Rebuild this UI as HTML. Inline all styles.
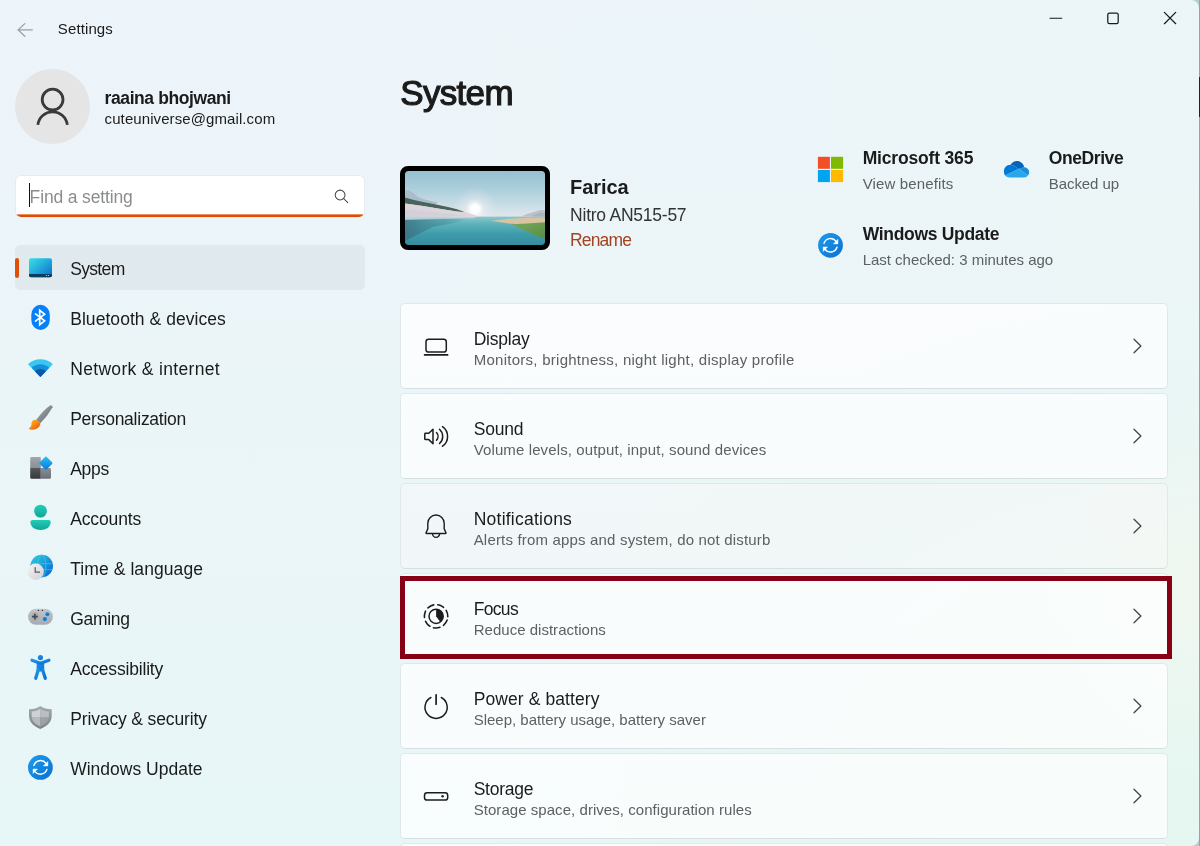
<!DOCTYPE html>
<html lang="en"><head><meta charset="utf-8"><title>Settings</title>
<style>
html,body{margin:0;padding:0}
body{width:1200px;height:846px;overflow:hidden;position:relative;background:#b5cdd3;font-family:"Liberation Sans",sans-serif}
#win{position:absolute;left:0;top:0;width:1199px;height:846px;overflow:hidden;border-radius:0 8px 8px 0;
 background:
  radial-gradient(ellipse 160px 190px at 1195px 590px, rgba(242,246,239,.85), rgba(242,246,239,0) 100%),
  radial-gradient(ellipse 700px 560px at 100% 100%, rgba(229,247,240,1), rgba(229,247,240,0) 100%),
  linear-gradient(90deg, rgba(235,246,246,0) 35%, rgba(235,246,246,.7) 100%),
  linear-gradient(180deg,#edf4fa 0%,#ebf5f8 42%,#e7f6f7 100%);}
#edge{position:absolute;left:1199px;top:0;width:1px;height:846px;background:#98a3a5}
#edge2{position:absolute;left:1199px;top:77px;width:1px;height:40px;background:#222}
.t{position:absolute;white-space:nowrap;line-height:1}
.card{position:absolute;left:400px;width:766px;height:84px;border:1px solid #dfe9ec;border-bottom-color:#d6e0e3;border-radius:5px;background:rgba(255,255,255,.72)}
.card.hov{background:rgba(249,249,249,.5)}
#sel{position:absolute;left:15px;top:245px;width:350px;height:45px;border-radius:5px;background:rgba(0,0,0,.042)}
#ind{position:absolute;left:15px;top:258px;width:4px;height:20px;border-radius:2px;background:#e0500a}
#avatar{position:absolute;left:15px;top:69px;width:75px;height:75px;border-radius:50%;background:#e5e5e5}
#search{position:absolute;left:16px;top:176px;width:348px;height:41px;border-radius:5px;background:#fff;box-shadow:0 0 0 1px rgba(0,0,0,.035);overflow:hidden}
#search:after{content:"";position:absolute;left:0;right:0;bottom:0;height:4px;background:linear-gradient(to top,#de4b04 0,#de4b04 2.1px,rgba(222,75,4,0) 3.1px)}
#caret{position:absolute;left:29px;top:183px;width:1px;height:24px;background:#111}
#dev{position:absolute;left:400px;top:166px;width:140px;height:74px;border:5px solid #000;border-radius:8px;overflow:hidden;background:#000}
#dev svg{display:block;border-radius:3px}
#red{position:absolute;left:400px;top:576px;width:762px;height:73px;border:5px solid #870016}
#ic{position:absolute;left:0;top:0}
#tx{position:absolute;left:0;top:0;width:1199px;height:846px;will-change:transform}
</style></head><body>
<div id="win"><div id="tx">
<div id="sel"></div><div id="ind"></div>
<div id="avatar"></div>
<div id="search"></div><div id="caret"></div>
<div class="card" style="top:303px"></div>
<div class="card" style="top:393px"></div>
<div class="card hov" style="top:483px"></div>
<div class="card" style="top:573px"></div>
<div class="card" style="top:663px"></div>
<div class="card" style="top:753px"></div>
<div class="card" style="top:843px"></div>
<div id="dev"><svg width="140" height="74" viewBox="0 0 140 74">
<defs>
<linearGradient id="sky" x1="0" y1="0" x2="0" y2="1"><stop offset="0" stop-color="#94c0d1"/><stop offset=".5" stop-color="#b4d3df"/><stop offset=".85" stop-color="#d3e2e9"/><stop offset="1" stop-color="#e2e6ea"/></linearGradient>
<radialGradient id="glow" cx="70" cy="38" r="22" gradientUnits="userSpaceOnUse"><stop offset="0" stop-color="#fff" stop-opacity="1"/><stop offset=".2" stop-color="#fff" stop-opacity=".9"/><stop offset=".45" stop-color="#f4eff1" stop-opacity=".4"/><stop offset="1" stop-color="#e8eef2" stop-opacity="0"/></radialGradient>
<linearGradient id="wat" x1="0" y1="0" x2="0" y2="1"><stop offset="0" stop-color="#8cc8cc"/><stop offset=".25" stop-color="#5eb3bb"/><stop offset=".6" stop-color="#3f9dab"/><stop offset="1" stop-color="#348c9f"/></linearGradient>
<linearGradient id="refl" x1="0" y1="0" x2="1" y2="0"><stop offset="0" stop-color="#3a6e80" stop-opacity=".8"/><stop offset=".6" stop-color="#3f8796" stop-opacity=".5"/><stop offset="1" stop-color="#3f8c99" stop-opacity="0"/></linearGradient>
<linearGradient id="snow" x1="0" y1="0" x2="1" y2="0"><stop offset="0" stop-color="#cfd3de"/><stop offset="1" stop-color="#e9e0e2"/></linearGradient>
<linearGradient id="grs" x1="0" y1="0" x2="1" y2="1"><stop offset="0" stop-color="#7aa860"/><stop offset="1" stop-color="#578f43"/></linearGradient>
<filter id="bl" x="-5%" y="-5%" width="110%" height="110%"><feGaussianBlur stdDeviation=".45"/></filter>
</defs>
<rect width="140" height="46" fill="url(#sky)"/>
<rect width="140" height="52" fill="url(#glow)"/>
<rect y="45.6" width="140" height="28.4" fill="url(#wat)"/>
<g filter="url(#bl)">
<path d="M0 48.5 L66 46.5 L50 52 L28 56 L0 70Z" fill="url(#refl)"/>
<path d="M0 46.5 L70 45.8 L70 47.2 L0 49Z" fill="#d8e6ea" opacity=".55"/>
<path d="M0 19 L4 19.5 L8 21.5 L13 26 L20 28.5 L26 30 L33 31.5 L40 34.5 L50 37 L56 38.5 L62 41.8 L74 45.8 L0 46.2Z" fill="url(#snow)"/>
<path d="M0 19 L4 19.5 L8 21.5 L13 26 L20 28.5 L26 30 L33 31.5 L30 33.5 L12 30.5 L0 27.5Z" fill="#a9bccb"/>
<path d="M0 26.5 L8 28.8 L18 31 L30 33.2 L42 35.8 L52 38.3 L60 41.2 L52 40.6 L36 38 L18 35 L0 32.5Z" fill="#47655a"/>
<path d="M0 32.5 L18 35 L36 38 L52 40.6 L60 41.2 L74 45.8 L0 46.2Z" fill="#ddd5dc"/>
<path d="M0 38 L30 41 L60 45 L0 46.2Z" fill="#cfcfd9" opacity=".8"/>
<path d="M116 45.6 L122 43 L129 41 L134 39.3 L138 39 L140 39.6 L140 45.8Z" fill="#bdbfc9"/>
<path d="M126 45.6 L134 42 L140 41.5 L140 45.8Z" fill="#9fb0b8" opacity=".7"/>
<path d="M86 49.8 L104 47.8 L124 46.8 L140 46.5 L140 52.5 L120 53.4 L104 52.6Z" fill="#d9c4a2"/>
<path d="M106 53.2 L122 52.6 L140 51.3 L140 67.5 L132 65.2 L120 59.5Z" fill="url(#grs)"/>
<circle cx="70" cy="37.3" r="3.8" fill="#fff"/>
</g>
</svg>
</div>
<div id="red"></div>
<svg id="ic" width="1199" height="846" viewBox="0 0 1199 846">
<defs>
<linearGradient id="gSys" x1="0" y1="0" x2="1" y2="1"><stop offset="0" stop-color="#38e0e6"/><stop offset=".5" stop-color="#22a8da"/><stop offset="1" stop-color="#0a6ac4"/></linearGradient>
<linearGradient id="gDia" x1="0" y1="0" x2="1" y2="1"><stop offset="0" stop-color="#2cc0f4"/><stop offset="1" stop-color="#0a78d8"/></linearGradient>
<linearGradient id="gA1" x1="0" y1="0" x2="0" y2="1"><stop offset="0" stop-color="#a2a6ad"/><stop offset="1" stop-color="#8a8e96"/></linearGradient><linearGradient id="gA2" x1="0" y1="0" x2="0" y2="1"><stop offset="0" stop-color="#55585c"/><stop offset="1" stop-color="#36383b"/></linearGradient><linearGradient id="gA3" x1="0" y1="0" x2="0" y2="1"><stop offset="0" stop-color="#888c93"/><stop offset="1" stop-color="#6c7077"/></linearGradient><linearGradient id="gSh" x1="0" y1="0" x2="0" y2="1"><stop offset="0" stop-color="#a4a9b0"/><stop offset="1" stop-color="#7e838a"/></linearGradient>
<linearGradient id="gAcc" x1="0" y1="0" x2="0" y2="1"><stop offset="0" stop-color="#22ceb6"/><stop offset="1" stop-color="#10a698"/></linearGradient>
<linearGradient id="gGlobe" x1="0" y1="0" x2="1" y2="1"><stop offset="0" stop-color="#30d0dc"/><stop offset=".5" stop-color="#1a9ad8"/><stop offset="1" stop-color="#0860cc"/></linearGradient>
<linearGradient id="gClk" x1="0" y1="0" x2="1" y2="1"><stop offset="0" stop-color="#f6f6f8"/><stop offset="1" stop-color="#cfcfd4"/></linearGradient>
<linearGradient id="gPad" x1="0" y1="0" x2="0" y2="1"><stop offset="0" stop-color="#c2c6cc"/><stop offset="1" stop-color="#a6aab1"/></linearGradient>
<linearGradient id="gAcs" x1="0" y1="0" x2="1" y2="1"><stop offset="0" stop-color="#1e96e8"/><stop offset="1" stop-color="#0a70d4"/></linearGradient>
<linearGradient id="gWu" x1="0" y1="0" x2="1" y2="1"><stop offset="0" stop-color="#1e9cec"/><stop offset="1" stop-color="#0a70d0"/></linearGradient>
<linearGradient id="gBrH" x1="0" y1="0" x2="1" y2="1"><stop offset="0" stop-color="#b4b9be"/><stop offset="1" stop-color="#5a5e64"/></linearGradient>
<linearGradient id="gBrO" x1="0" y1="0" x2="1" y2="1"><stop offset="0" stop-color="#ffbe1e"/><stop offset=".5" stop-color="#fa8a10"/><stop offset="1" stop-color="#e4480c"/></linearGradient>
<clipPath id="shc"><path d="M40.3 708.7 C43 710.6 45.6 711.4 48.9 711.5 L48.9 716 C48.9 721 45.4 724.2 40.3 726.5 C35.2 724.2 31.7 721 31.7 716 L31.7 711.5 C35 711.4 37.6 710.6 40.3 708.7Z"/></clipPath>
</defs>
<!-- back arrow -->
<path d="M32.3 29.9 L17.9 29.9 M24.8 23.6 L18.2 29.9 L24.8 36.3" fill="none" stroke="#9aa0a4" stroke-width="1.3" stroke-linecap="round" stroke-linejoin="round"/>
<!-- avatar person -->
<g fill="none" stroke="#3a3a3a" stroke-width="2.8"><circle cx="52.6" cy="99.6" r="10.4"/><path d="M37.9 124.9 A14.8 14.8 0 0 1 67.3 124.9"/></g>
<!-- search -->
<g fill="none" stroke="#4a4a4a" stroke-width="1.05" stroke-linecap="round"><circle cx="340.1" cy="195" r="4.9"/><path d="M343.7 198.6 L347.8 202.7"/></g>
<!-- window controls -->
<g fill="none" stroke="#1a1a1a" stroke-width="1.25" stroke-linecap="round"><path d="M1050 18.25 H1061.8" stroke-width="1.1"/><rect x="1107.8" y="13.1" width="10.4" height="10.4" rx="1.6"/><path d="M1164.4 12.4 L1175.7 23.7 M1175.7 12.4 L1164.4 23.7"/></g>
<!-- System -->
<rect x="29" y="258.2" width="23" height="19" rx="2" fill="url(#gSys)"/>
<path d="M29 274.1 H52 V275.2 A2 2 0 0 1 50 277.2 H31 A2 2 0 0 1 29 275.2Z" fill="#0b3c62"/>
<rect x="45.9" y="275" width="1" height="1" fill="#9fd0ee"/><rect x="47.9" y="275" width="1" height="1" fill="#9fd0ee"/>
<!-- Bluetooth -->
<rect x="31.3" y="304.7" width="18.5" height="25.3" rx="9.25" ry="10" fill="#0680f8"/>
<path d="M35.5 313.9 L44.6 320.8 L39.7 324.7 L39.7 310.3 L44.6 314.2 L35.5 321.1" fill="none" stroke="#fff" stroke-width="1.7" stroke-linejoin="miter" stroke-linecap="round"/>
<!-- Network -->
<path d="M40.4 376.9 L28.03 364.33 A17.5 17.5 0 0 1 52.77 364.33Z" fill="#38c6f2"/>
<path d="M40.4 376.9 L31.56 367.86 A12.5 12.5 0 0 1 49.24 367.86Z" fill="#1490df"/>
<path d="M40.4 376.9 L34.88 371.18 A7.8 7.8 0 0 1 45.92 371.18Z" fill="#0c58a2"/>
<!-- Personalization -->
<path d="M36.1 419.9 Q44 409.5 50.4 405.3 Q52.6 405.2 52.6 407.2 Q47.5 416 40.3 423.3Z" fill="url(#gBrH)"/>
<path d="M36.1 419.9 C33.2 419.4 31.3 421.4 31.4 424 C31.5 426.3 30.2 427.8 28.5 428.4 C31 430.3 36 430.1 38.6 427.3 C40.6 425.2 40.3 423.3 40.3 423.3Z" fill="url(#gBrO)"/>
<!-- Apps -->
<path d="M31.7 457.1 H39.8 A1 1 0 0 1 40.8 458.1 V468 H30.2 V458.6 A1.5 1.5 0 0 1 31.7 457.1Z" fill="url(#gA1)"/>
<path d="M30.2 468 H40.8 V478.7 H31.7 A1.5 1.5 0 0 1 30.2 477.2Z" fill="url(#gA2)"/>
<path d="M40.8 468 H49.5 A1.5 1.5 0 0 1 51 469.5 V477.2 A1.5 1.5 0 0 1 49.5 478.7 H40.8Z" fill="url(#gA3)"/>
<rect x="-4.95" y="-4.95" width="9.9" height="9.9" rx="1.2" transform="translate(45.9 463.1) rotate(45)" fill="url(#gDia)"/>
<!-- Accounts -->
<circle cx="40.5" cy="511.1" r="6.4" fill="url(#gAcc)"/>
<path d="M30.4 522 Q30.4 519.9 32.5 519.9 L48.6 519.9 Q50.7 519.9 50.7 522 C50.7 527 46 530 40.55 530 C35 530 30.4 527 30.4 522Z" fill="url(#gAcc)"/>
<!-- Time & language -->
<circle cx="41.7" cy="566.1" r="11.3" fill="url(#gGlobe)"/>
<g fill="none" stroke="#48dcec" stroke-width=".8" opacity=".65"><ellipse cx="41.8" cy="566.1" rx="4.1" ry="11.3"/><path d="M30.8 563.7 H52.8 M30.9 569.6 H52.6"/></g>
<circle cx="35.7" cy="571.8" r="8.2" fill="url(#gClk)"/>
<path d="M35.2 567.5 V572.2 H39.5" fill="none" stroke="#5a5a5e" stroke-width="1.25" stroke-linecap="round" stroke-linejoin="round"/>
<!-- Gaming -->
<rect x="28" y="608.7" width="24.9" height="16.1" rx="8" fill="url(#gPad)"/>
<circle cx="34.9" cy="616.6" r="4.3" fill="#a4a8af" opacity=".7"/>
<path d="M32 616.6 H37.8 M34.9 613.7 V619.5" stroke="#48494d" stroke-width="1.7" fill="none"/>
<circle cx="47.4" cy="614.2" r="2" fill="#1080e0"/><circle cx="44.9" cy="619.1" r="2.1" fill="#1080e0"/>
<circle cx="38.4" cy="610.4" r=".7" fill="#333"/><circle cx="42.4" cy="610.4" r=".7" fill="#333"/>
<!-- Accessibility -->
<g fill="url(#gAcs)" stroke="url(#gAcs)"><circle cx="40.4" cy="657.6" r="2.6" stroke="none"/>
<path d="M36.6 662.2 H44.2 V671.5 H36.6Z" stroke="none"/>
<path d="M32 660.3 L40.4 663.2 L48.9 660.3" fill="none" stroke-width="3.3" stroke-linecap="round" stroke-linejoin="round"/>
<path d="M38.2 670 L35.7 678.2 M42.6 670 L45.3 678.2" fill="none" stroke-width="3.3" stroke-linecap="round"/></g>
<!-- Privacy shield -->
<path d="M40.3 706 C43.5 708.5 47 709.2 51.7 709.2 L51.7 716 C51.7 722.5 46.5 726.4 40.3 728.9 C34.2 726.4 29 722.5 29 716 L29 709.2 C33.6 709.2 37.1 708.5 40.3 706Z" fill="url(#gSh)"/>
<g clip-path="url(#shc)"><rect x="29" y="705" width="11.3" height="12.5" fill="#ced2d7"/><rect x="40.3" y="705" width="12" height="12.5" fill="#b9bec4"/><rect x="29" y="717.5" width="11.3" height="12" fill="#b6babf"/><rect x="40.3" y="717.5" width="12" height="12" fill="#9da2a9"/></g>
<!-- Windows Update nav -->
<g transform="translate(40.4 767.4)"><circle r="12.4" fill="url(#gWu)"/>
<g fill="none" stroke="#fff" stroke-width="1.45" stroke-linecap="round"><path d="M-6.5 -2 A6.9 6.9 0 0 1 5.6 -4"/><path d="M6.5 2 A6.9 6.9 0 0 1 -5.6 4"/></g>
<path d="M7.5 -6 L7.5 -1.4 L2.9 -1.4Z M-7.4 6.2 L-7.4 1.6 L-2.8 1.6Z" fill="#fff" stroke="#fff" stroke-width=".4" stroke-linejoin="round"/></g>
<!-- MS logo -->
<rect x="817.9" y="156.8" width="12" height="12" fill="#f25022"/><rect x="831" y="156.8" width="12.1" height="12" fill="#7fba00"/>
<rect x="817.9" y="170" width="12" height="12.1" fill="#00a4ef"/><rect x="831" y="170" width="12.1" height="12.1" fill="#ffb900"/>
<!-- OneDrive -->
<path d="M1010.5 164.8 C1012 162.4 1014.3 161 1017 161 C1020.4 161 1023.3 163.3 1024.2 167.2 L1018.7 168.9 L1013.5 165.6 C1012.6 165.1 1011.6 164.8 1010.5 164.8Z" fill="#0364b8"/>
<path d="M1003.9 171.5 C1003.9 167.8 1006.5 164.8 1010.2 164.8 C1011.5 164.8 1012.5 165.1 1013.5 165.6 L1018.7 168.8 L1005 175.6 C1004.3 174.3 1003.9 173 1003.9 171.5Z" fill="#0078d4"/>
<path d="M1018.7 168.8 L1024.2 167.2 C1026.9 167.2 1029.1 169.5 1029.1 172.3 C1029.1 173.6 1028.7 174.6 1028 175.5Z" fill="#1490df"/>
<path d="M1005 175.6 L1018.7 168.8 L1028 175.5 C1027 176.7 1025.6 177.4 1024 177.4 L1009.5 177.4 C1007.6 177.4 1006 176.7 1005 175.6Z" fill="#28a8ea"/>
<!-- Windows Update right -->
<g transform="translate(830.5 245.3)"><circle r="12.4" fill="url(#gWu)"/>
<g fill="none" stroke="#fff" stroke-width="1.45" stroke-linecap="round"><path d="M-6.5 -2 A6.9 6.9 0 0 1 5.6 -4"/><path d="M6.5 2 A6.9 6.9 0 0 1 -5.6 4"/></g>
<path d="M7.5 -6 L7.5 -1.4 L2.9 -1.4Z M-7.4 6.2 L-7.4 1.6 L-2.8 1.6Z" fill="#fff" stroke="#fff" stroke-width=".4" stroke-linejoin="round"/></g>
<!-- card icons -->
<g fill="none" stroke="#1c1c1c" stroke-width="1.5" stroke-linecap="round" stroke-linejoin="round">
<rect x="426" y="339.3" width="20.3" height="12.7" rx="2.6"/><path d="M424.6 354.9 H447.6" stroke-width="1.7"/>
<path d="M424.8 434 Q424.8 433.3 425.5 433.3 L428.8 433.3 L433 429.2 L433 443.8 L428.8 439.6 L425.5 439.6 Q424.8 439.6 424.8 438.9Z"/>
<path d="M436.5 432.6 A5.7 5.7 0 0 1 436.5 440.3"/><path d="M439.5 429.3 A9.5 9.5 0 0 1 439.5 443.5"/><path d="M442.5 426.6 A12 12 0 0 1 442.5 446.2"/>
<path d="M427.8 528.9 L427.8 523.2 A8.2 8.2 0 0 1 444.2 523.2 L444.2 528.9 L446 532.7 Q446.2 533.5 445.4 533.5 L426.6 533.5 Q425.8 533.5 426 532.7Z" stroke-width="1.4"/>
<path d="M432.6 533.8 A3.5 3.6 0 0 0 439.6 533.8" stroke-width="1.4"/>
<circle cx="436.1" cy="616.3" r="11.7" stroke-width="1.6" stroke-dasharray="6.5 4" transform="rotate(19 436.1 616.3)"/>
<circle cx="436.1" cy="616.3" r="7.1"/>
<path d="M430.9 697.5 A11.1 11.1 0 1 0 441.3 697.5"/><path d="M436.1 694.9 V704.2" stroke-width="1.7"/>
<rect x="424.5" y="792.8" width="23.2" height="7.3" rx="2.6"/>
</g>
<path d="M436.1 616.3 L436.1 609.2 A7.1 7.1 0 0 1 440.27 622.04Z" fill="#1c1c1c"/>
<circle cx="442.6" cy="796.2" r="1.2" fill="#1c1c1c"/>
<g fill="none" stroke="#454545" stroke-width="1.3" stroke-linecap="round" stroke-linejoin="round"><path d="M1134 339.3 L1140.9 346.0 L1134 352.8"/><path d="M1134 429.3 L1140.9 436.0 L1134 442.8"/><path d="M1134 519.3 L1140.9 526.0 L1134 532.8"/><path d="M1134 609.3 L1140.9 616.0 L1134 622.8"/><path d="M1134 699.3 L1140.9 706.0 L1134 712.8"/><path d="M1134 789.3 L1140.9 796.0 L1134 802.8"/></g>
</svg>
<span id="ttl" class="t" style="left:57.80px;top:21.20px;font-size:15px;font-weight:400;color:#1b1b1b;letter-spacing:0.120px">Settings</span>
<span id="nm" class="t" style="left:104.60px;top:89.59px;font-size:17.5px;font-weight:700;color:#1b1b1b;letter-spacing:-0.410px">raaina bhojwani</span>
<span id="em" class="t" style="left:104.60px;top:110.80px;font-size:15px;font-weight:400;color:#1b1b1b;letter-spacing:0.091px">cuteuniverse@gmail.com</span>
<span id="ph" class="t" style="left:29.60px;top:188.59px;font-size:17.5px;font-weight:400;color:#8a8d8f;letter-spacing:-0.145px">Find a setting</span>
<span id="n0" class="t" style="left:70.20px;top:260.99px;font-size:17.5px;font-weight:400;color:#1b1b1b;letter-spacing:-0.665px">System</span>
<span id="n1" class="t" style="left:70.20px;top:310.99px;font-size:17.5px;font-weight:400;color:#1b1b1b;letter-spacing:0.055px">Bluetooth &amp; devices</span>
<span id="n2" class="t" style="left:70.20px;top:360.99px;font-size:17.5px;font-weight:400;color:#1b1b1b;letter-spacing:0.328px">Network &amp; internet</span>
<span id="n3" class="t" style="left:70.20px;top:410.99px;font-size:17.5px;font-weight:400;color:#1b1b1b;letter-spacing:-0.252px">Personalization</span>
<span id="n4" class="t" style="left:70.20px;top:460.99px;font-size:17.5px;font-weight:400;color:#1b1b1b;letter-spacing:-0.254px">Apps</span>
<span id="n5" class="t" style="left:70.20px;top:510.99px;font-size:17.5px;font-weight:400;color:#1b1b1b;letter-spacing:-0.131px">Accounts</span>
<span id="n6" class="t" style="left:70.20px;top:560.99px;font-size:17.5px;font-weight:400;color:#1b1b1b;letter-spacing:0.079px">Time &amp; language</span>
<span id="n7" class="t" style="left:70.20px;top:610.99px;font-size:17.5px;font-weight:400;color:#1b1b1b;letter-spacing:-0.288px">Gaming</span>
<span id="n8" class="t" style="left:70.20px;top:660.99px;font-size:17.5px;font-weight:400;color:#1b1b1b;letter-spacing:-0.185px">Accessibility</span>
<span id="n9" class="t" style="left:70.20px;top:710.99px;font-size:17.5px;font-weight:400;color:#1b1b1b;letter-spacing:-0.135px">Privacy &amp; security</span>
<span id="n10" class="t" style="left:70.20px;top:760.99px;font-size:17.5px;font-weight:400;color:#1b1b1b;letter-spacing:0.008px">Windows Update</span>
<span id="h1" class="t" style="left:400.30px;top:75.17px;font-size:35px;font-weight:400;color:#1b1b1b;letter-spacing:-0.691px;-webkit-text-stroke:1.2px #1b1b1b">System</span>
<span id="dv" class="t" style="left:570.10px;top:177.37px;font-size:20px;font-weight:700;color:#1b1b1b;letter-spacing:-0.061px">Farica</span>
<span id="dm" class="t" style="left:570.10px;top:206.89px;font-size:17.5px;font-weight:400;color:#333;letter-spacing:-0.241px">Nitro AN515-57</span>
<span id="rn" class="t" style="left:570.10px;top:232.39px;font-size:17.5px;font-weight:400;color:#a3431f;letter-spacing:-0.865px">Rename</span>
<span id="m1" class="t" style="left:862.70px;top:149.69px;font-size:17.5px;font-weight:700;color:#1b1b1b;letter-spacing:-0.177px">Microsoft 365</span>
<span id="m2" class="t" style="left:862.70px;top:176.30px;font-size:15px;font-weight:400;color:#5d6163;letter-spacing:0.140px">View benefits</span>
<span id="o1" class="t" style="left:1048.80px;top:149.69px;font-size:17.5px;font-weight:700;color:#1b1b1b;letter-spacing:-0.428px">OneDrive</span>
<span id="o2" class="t" style="left:1048.80px;top:176.30px;font-size:15px;font-weight:400;color:#5d6163;letter-spacing:-0.081px">Backed up</span>
<span id="w1" class="t" style="left:862.70px;top:225.69px;font-size:17.5px;font-weight:700;color:#1b1b1b;letter-spacing:-0.312px">Windows Update</span>
<span id="w2" class="t" style="left:862.70px;top:252.30px;font-size:15px;font-weight:400;color:#5d6163;letter-spacing:-0.017px">Last checked: 3 minutes ago</span>
<span id="c0a" class="t" style="left:473.70px;top:330.99px;font-size:17.5px;font-weight:400;color:#1b1b1b;letter-spacing:-0.229px">Display</span>
<span id="c0b" class="t" style="left:473.70px;top:352.30px;font-size:15px;font-weight:400;color:#5d6163;letter-spacing:0.264px">Monitors, brightness, night light, display profile</span>
<span id="c1a" class="t" style="left:473.70px;top:420.99px;font-size:17.5px;font-weight:400;color:#1b1b1b;letter-spacing:-0.202px">Sound</span>
<span id="c1b" class="t" style="left:473.70px;top:442.30px;font-size:15px;font-weight:400;color:#5d6163;letter-spacing:0.118px">Volume levels, output, input, sound devices</span>
<span id="c2a" class="t" style="left:473.70px;top:510.99px;font-size:17.5px;font-weight:400;color:#1b1b1b;letter-spacing:0.238px">Notifications</span>
<span id="c2b" class="t" style="left:473.70px;top:532.30px;font-size:15px;font-weight:400;color:#5d6163;letter-spacing:0.176px">Alerts from apps and system, do not disturb</span>
<span id="c3a" class="t" style="left:473.70px;top:600.99px;font-size:17.5px;font-weight:400;color:#1b1b1b;letter-spacing:-0.679px">Focus</span>
<span id="c3b" class="t" style="left:473.70px;top:622.30px;font-size:15px;font-weight:400;color:#5d6163;letter-spacing:0.020px">Reduce distractions</span>
<span id="c4a" class="t" style="left:473.70px;top:690.99px;font-size:17.5px;font-weight:400;color:#1b1b1b;letter-spacing:0.097px">Power &amp; battery</span>
<span id="c4b" class="t" style="left:473.70px;top:712.30px;font-size:15px;font-weight:400;color:#5d6163;letter-spacing:-0.013px">Sleep, battery usage, battery saver</span>
<span id="c5a" class="t" style="left:473.70px;top:780.99px;font-size:17.5px;font-weight:400;color:#1b1b1b;letter-spacing:-0.246px">Storage</span>
<span id="c5b" class="t" style="left:473.70px;top:802.30px;font-size:15px;font-weight:400;color:#5d6163;letter-spacing:0.049px">Storage space, drives, configuration rules</span>
</div></div>
<div id="edge"></div><div id="edge2"></div>
</body></html>
